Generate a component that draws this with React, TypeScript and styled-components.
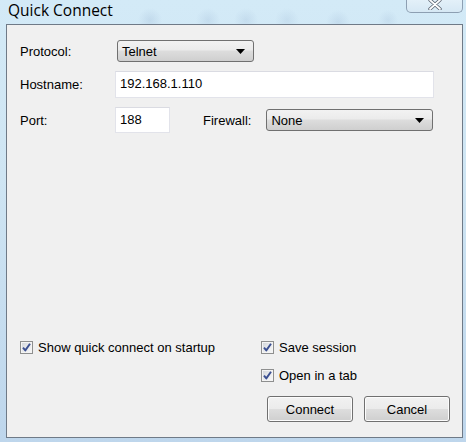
import styled, { createGlobalStyle } from "styled-components";

const GlobalStyle = createGlobalStyle`
  html, body {
    margin: 0;
    padding: 0;
    background: #cfe6f4;
  }
  body {
    font-family: "Liberation Sans", Arial, sans-serif;
    font-size: 13px;
    color: #000;
  }
`;

function CheckMark() {
  return (
    <svg width="11" height="11" viewBox="0 0 11 11">
      <path d="M2 5.6 L4.3 8.4 L9 1.8" fill="none" stroke="#3b4f91" strokeWidth="1.9" strokeLinejoin="round" />
    </svg>
  );
}

function DropArrow() {
  return (
    <svg width="9" height="5" viewBox="0 0 9 5">
      <path d="M0 0 H9 L4.5 5 Z" fill="#000" />
    </svg>
  );
}

function CloseGlyph() {
  return (
    <svg width="16" height="11" viewBox="0 0 16 11">
      <path d="M3 1 L13 10 M13 1 L3 10" stroke="#5a6470" strokeWidth="3.4" strokeLinecap="round" />
      <path d="M3 1 L13 10 M13 1 L3 10" stroke="#fff" strokeWidth="1.8" strokeLinecap="round" />
    </svg>
  );
}

function Option({ label, checked }: { label: string; checked: boolean }) {
  return (
    <OptionRow>
      <Box>{checked && <CheckMark />}</Box>
      <span>{label}</span>
    </OptionRow>
  );
}

function Dropdown({ value, width }: { value: string; width: number }) {
  return (
    <Select style={{ width }}>
      <span>{value}</span>
      <DropArrow />
    </Select>
  );
}

export default function App() {
  return (
    <>
      <GlobalStyle />
      <Frame>
        <TitleBar>
          <Title>Quick Connect</Title>
          <CloseButton>
            <CloseGlyph />
          </CloseButton>
        </TitleBar>

        <Panel>
          <Form>
            <Row>
              <Label>Protocol:</Label>
              <SelectSlot>
                <Dropdown value="Telnet" width={137} />
              </SelectSlot>
            </Row>

            <Row>
              <Label>Hostname:</Label>
              <TextBox $width={319} $height={27}>192.168.1.110</TextBox>
            </Row>

            <Row>
              <Label>Port:</Label>
              <TextBox $width={55} $height={26}>188</TextBox>
              <FirewallLabel>Firewall:</FirewallLabel>
              <Dropdown value="None" width={167} />
            </Row>
          </Form>

          <Footer>
            <Options>
              <Option label="Show quick connect on startup" checked />
              <Option label="Save session" checked />
              <span />
              <Option label="Open in a tab" checked />
            </Options>

            <Buttons>
              <Button>Connect</Button>
              <Button>Cancel</Button>
            </Buttons>
          </Footer>
        </Panel>
      </Frame>
    </>
  );
}

const Frame = styled.div`
  width: 466px;
  height: 442px;
  box-sizing: border-box;
  padding: 0 3px 4px 6px;
  display: flex;
  flex-direction: column;
  background:
    radial-gradient(circle at 150px 20px, rgba(120, 150, 190, 0.18) 0, rgba(120, 150, 190, 0) 12px),
    radial-gradient(circle at 208px 20px, rgba(120, 150, 190, 0.16) 0, rgba(120, 150, 190, 0) 12px),
    radial-gradient(circle at 246px 20px, rgba(120, 150, 190, 0.16) 0, rgba(120, 150, 190, 0) 12px),
    radial-gradient(circle at 287px 20px, rgba(120, 150, 190, 0.14) 0, rgba(120, 150, 190, 0) 12px),
    radial-gradient(circle at 338px 22px, rgba(120, 150, 190, 0.16) 0, rgba(120, 150, 190, 0) 12px),
    radial-gradient(circle at 388px 20px, rgba(120, 150, 190, 0.14) 0, rgba(120, 150, 190, 0) 10px),
    linear-gradient(180deg, #d3eaf7 0%, #cfe5f3 40%, #bed6ec 100%);
  overflow: hidden;
`;

const TitleBar = styled.div`
  height: 24px;
  display: flex;
  justify-content: space-between;
  align-items: flex-start;
`;

const Title = styled.div`
  font-family: "Open Sans", "Noto Sans", sans-serif;
  font-size: 15.5px;
  line-height: 20px;
  margin: 0 0 0 2px;
  color: #000;
`;

const CloseButton = styled.div`
  width: 57px;
  height: 14px;
  margin-top: -1px;
  border: 1px solid #8d9fb2;
  border-top: none;
  border-radius: 0 0 5px 5px;
  background: linear-gradient(180deg, #e4f1f9 0%, #d6e8f4 100%);
  display: flex;
  justify-content: center;
  align-items: flex-start;
  box-sizing: border-box;
`;

const Panel = styled.div`
  flex: 1;
  background: #f0f0f0;
  border: 1px solid #6f7a87;
  display: flex;
  flex-direction: column;
  justify-content: space-between;
`;

const Form = styled.div`
  display: flex;
  flex-direction: column;
  gap: 9px;
  padding: 15px 0 0 13px;
`;

const Row = styled.div`
  display: flex;
  align-items: center;
`;

const Label = styled.div`
  width: 95px;
  flex-shrink: 0;
`;

const SelectSlot = styled.div`
  margin-left: 2px;
`;

const FirewallLabel = styled.div`
  margin: 0 15px 0 33px;
`;

const TextBox = styled.div<{ $width: number; $height: number }>`
  width: ${p => p.$width}px;
  height: ${p => p.$height}px;
  box-sizing: border-box;
  background: #fff;
  border: 1px solid #e2e3ea;
  border-top-color: #dadbe2;
  padding: 4px 0 0 4px;
`;

const Select = styled.div`
  height: 22px;
  box-sizing: border-box;
  border: 1px solid #707070;
  border-radius: 3px;
  background: linear-gradient(180deg, #f2f2f2 0%, #ebebeb 45%, #dddddd 50%, #cfcfcf 100%);
  display: flex;
  align-items: center;
  justify-content: space-between;
  padding: 0 8px 0 4px;
`;

const Footer = styled.div`
  display: flex;
  flex-direction: column;
  padding: 0 12px 15px 12px;
`;

const Options = styled.div`
  display: grid;
  grid-template-columns: 241px 1fr;
  row-gap: 12px;
`;

const OptionRow = styled.div`
  display: flex;
  align-items: center;
  gap: 5px;
  height: 16px;
`;

const Box = styled.span`
  width: 13px;
  height: 13px;
  margin-left: 1px;
  box-sizing: border-box;
  border: 1px solid #8e8f8f;
  background: linear-gradient(135deg, #cfd3d8 0%, #e8eaec 50%, #f8f8f8 100%);
  box-shadow: inset 0 0 0 1px #f4f4f4;
  display: flex;
  align-items: center;
  justify-content: center;
`;

const Buttons = styled.div`
  display: flex;
  justify-content: flex-end;
  gap: 11px;
  margin-top: 13px;
`;

const Button = styled.div`
  width: 86px;
  height: 26px;
  box-sizing: border-box;
  border: 1px solid #707070;
  border-radius: 3px;
  background: linear-gradient(180deg, #f2f2f2 0%, #ebebeb 48%, #dddddd 52%, #cfcfcf 100%);
  box-shadow: inset 0 0 0 1px #fcfcfc;
  display: flex;
  align-items: center;
  justify-content: center;
`;
